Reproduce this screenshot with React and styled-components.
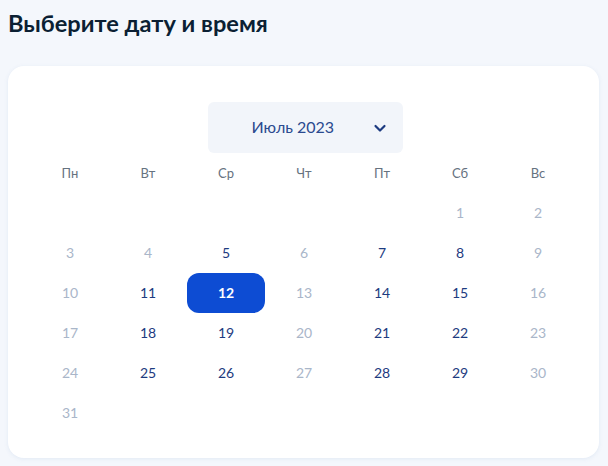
import React from "react";
import styled, { createGlobalStyle } from "styled-components";

const GlobalStyle = createGlobalStyle`
  html, body {
    margin: 0;
    padding: 0;
    background: #f4f7fc;
    font-family: Lato, "Noto Sans", sans-serif;
  }
`;

const Page = styled.div`
  padding: 0 8px;
  width: 608px;
  height: 466px;
  box-sizing: border-box;
  overflow: hidden;
`;

const Title = styled.h1`
  margin: 0;
  padding: 9px 0 0 0;
  height: 57px;
  box-sizing: border-box;
  font-size: 23.6px;
  font-weight: 700;
  color: #0b1f33;
`;

const Card = styled.div`
  margin-top: 9px;
  width: 591px;
  height: 392px;
  box-sizing: border-box;
  background: #fff;
  border-radius: 16px;
  box-shadow: 0 1px 4px rgba(102, 140, 190, 0.12);
  padding: 36px 23px 0;
`;

const MonthRow = styled.div`
  display: flex;
  justify-content: center;
`;

const MonthSelect = styled.button`
  width: 195px;
  height: 51px;
  margin-left: 3px;
  border: none;
  border-radius: 6px;
  background: #f2f5fa;
  display: flex;
  align-items: center;
  padding: 0 16px 0 44px;
  font-family: inherit;
  font-size: 16px;
  color: #2b4a8f;
  cursor: pointer;
`;

const MonthLabel = styled.span`
  flex: 1;
  text-align: left;
  padding-bottom: 3px;
`;

const Grid = styled.div`
  display: grid;
  grid-template-columns: repeat(7, 78px);
  grid-template-rows: 39px;
  grid-auto-rows: 40px;
  margin-top: 1px;
`;

const WeekDay = styled.div`
  display: flex;
  align-items: center;
  justify-content: center;
  font-size: 13px;
  color: #66727f;
  padding-bottom: 1px;
`;

const Day = styled.div`
  display: flex;
  align-items: center;
  justify-content: center;
  font-size: 14px;
  border-radius: 12px;
  padding-bottom: 1px;
  font-weight: ${(p) => (p.$selected ? 700 : 400)};
  color: ${(p) => (p.$selected ? "#fff" : p.$active ? "#1d3b80" : "#a9b6c9")};
  background: ${(p) => (p.$selected ? "#0d4cd3" : "transparent")};
`;

const weekDays = ["Пн", "Вт", "Ср", "Чт", "Пт", "Сб", "Вс"];
const activeDays = [5, 7, 8, 11, 12, 14, 15, 18, 19, 21, 22, 25, 26, 28, 29];

const Chevron = () => (
  <svg width="14" height="14" viewBox="0 0 14 14" fill="none">
    <path d="M2.5 5 L7 9.5 L11.5 5" stroke="#1d3b80" strokeWidth="2.2" strokeLinecap="round" strokeLinejoin="round" />
  </svg>
);

export default function App() {
  const cells = [];
  for (let i = 0; i < 5; i++) cells.push(<div key={"e" + i} />);
  for (let d = 1; d <= 31; d++) {
    cells.push(
      <Day key={d} $active={activeDays.includes(d)} $selected={d === 12}>
        {d}
      </Day>
    );
  }

  return (
    <Page>
      <GlobalStyle />
      <Title>Выберите дату и время</Title>
      <Card>
        <MonthRow>
          <MonthSelect>
            <MonthLabel>Июль 2023</MonthLabel>
            <Chevron />
          </MonthSelect>
        </MonthRow>
        <Grid>
          {weekDays.map((w) => (
            <WeekDay key={w}>{w}</WeekDay>
          ))}
          {cells}
        </Grid>
      </Card>
    </Page>
  );
}
